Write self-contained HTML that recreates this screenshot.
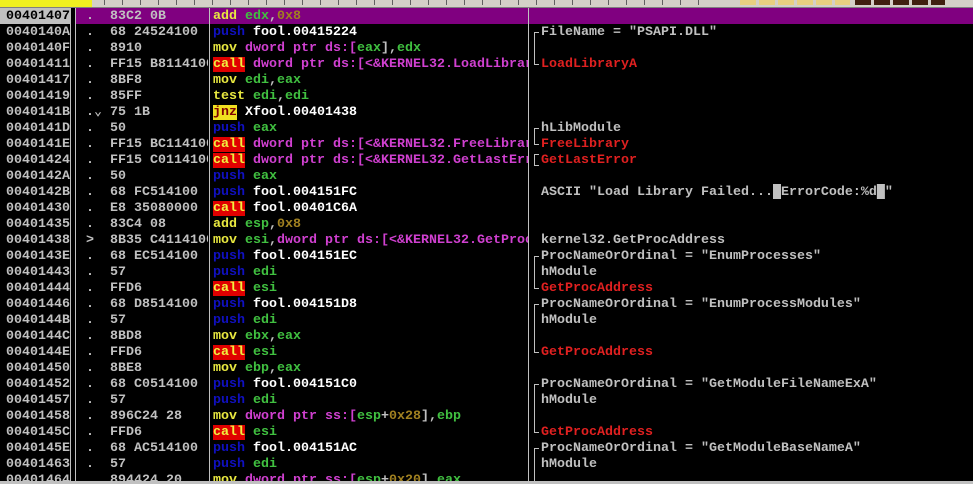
<!DOCTYPE html>
<html><head><meta charset="utf-8"><style>
html,body{margin:0;padding:0;background:#000;width:973px;height:484px;overflow:hidden}
body{position:relative;font-family:"Liberation Mono",monospace;font-weight:bold;font-size:13.33px;color:#c0c0c0}
.tb{position:absolute;left:0;top:0;width:973px;height:8px;background:#d4d0c8}
.row{position:absolute;left:0;width:973px;height:16px;line-height:18px;white-space:pre}
.c{position:absolute;top:0;height:16px;overflow:hidden}
.a{left:6px;width:64px}
.h{left:86px;width:122px}
.d{left:213px;width:315px}
.m{left:541px;width:432px}
.vl{position:absolute;top:8px;height:473px;width:1px;background:#c0c0c0}
.y{color:#e8e840}.g{color:#40c040}.b{color:#1010c0}.p{color:#d040d0}.w{color:#fff}.o{color:#a08020}.r{color:#e02020}
.call{background:#e00000;color:#f0f040}
.jnz{background:#f0e020;color:#800000}
.sel{background:#800080}
.br{position:absolute;left:534px;border-left:1px solid #c0c0c0}
.t{position:absolute;left:534px;width:5px;height:1px;background:#c0c0c0}
</style></head><body>
<div class="tb">
<div style="position:absolute;left:0;top:0;width:92px;height:7px;background:#f0f020"></div>
<div style="position:absolute;left:100px;top:0;width:600px;height:5px;background:repeating-linear-gradient(90deg,#d4d0c8 0 4px,#606060 4px 5px,#d4d0c8 5px 18px)"></div>
<div style="position:absolute;left:740px;top:0;width:110px;height:5px;background:repeating-linear-gradient(90deg,#e8d080 0 16px,#d4d0c8 16px 19px)"></div>
<div style="position:absolute;left:855px;top:0;width:90px;height:5px;background:repeating-linear-gradient(90deg,#402010 0 16px,#d4d0c8 16px 19px)"></div>
<div style="position:absolute;left:0;top:7px;width:973px;height:1px;background:#808080"></div>
</div>
<div class="row sel" style="top:8px;left:76px;width:897px"></div>
<div style="position:absolute;top:8px;left:0;width:70px;height:16px;background:#c0c0c0"></div>

<div class="vl" style="left:70px"></div>
<div class="vl" style="left:75px"></div>
<div class="vl" style="left:209px"></div>
<div class="vl" style="left:528px"></div>
<div style="position:absolute;left:0;top:481px;width:973px;height:3px;background:#c0c0c0"></div>

<div class="row" style="top:8px"><span class="c a" style="color:#000">00401407</span><span class="c h">.  83C2 0B</span><span class="c d"><span class="y">add</span> <span class="g">edx</span>,<span class="o">0x8</span></span></div>
<div class="row" style="top:24px"><span class="c a">0040140A</span><span class="c h">.  68 24524100</span><span class="c d"><span class="b">push</span> <span class="w">fool.00415224</span></span><span class="c m">FileName = "PSAPI.DLL"</span></div>
<div class="row" style="top:40px"><span class="c a">0040140F</span><span class="c h">.  8910</span><span class="c d"><span class="y">mov</span> <span class="p">dword ptr ds:[</span><span class="g">eax</span>],<span class="g">edx</span></span></div>
<div class="row" style="top:56px"><span class="c a">00401411</span><span class="c h">.  FF15 B8114100</span><span class="c d"><span class="call">call</span> <span class="p">dword ptr ds:[&lt;&amp;KERNEL32.LoadLibraryA&gt;]</span></span><span class="c m r">LoadLibraryA</span></div>
<div class="row" style="top:72px"><span class="c a">00401417</span><span class="c h">.  8BF8</span><span class="c d"><span class="y">mov</span> <span class="g">edi</span>,<span class="g">eax</span></span></div>
<div class="row" style="top:88px"><span class="c a">00401419</span><span class="c h">.  85FF</span><span class="c d"><span class="y">test</span> <span class="g">edi</span>,<span class="g">edi</span></span></div>
<div class="row" style="top:104px"><span class="c a">0040141B</span><span class="c h">.&#x2304; 75 1B</span><span class="c d"><span class="jnz">jnz</span> <span class="w">Xfool.00401438</span></span></div>
<div class="row" style="top:120px"><span class="c a">0040141D</span><span class="c h">.  50</span><span class="c d"><span class="b">push</span> <span class="g">eax</span></span><span class="c m">hLibModule</span></div>
<div class="row" style="top:136px"><span class="c a">0040141E</span><span class="c h">.  FF15 BC114100</span><span class="c d"><span class="call">call</span> <span class="p">dword ptr ds:[&lt;&amp;KERNEL32.FreeLibrary&gt;]</span></span><span class="c m r">FreeLibrary</span></div>
<div class="row" style="top:152px"><span class="c a">00401424</span><span class="c h">.  FF15 C0114100</span><span class="c d"><span class="call">call</span> <span class="p">dword ptr ds:[&lt;&amp;KERNEL32.GetLastError&gt;]</span></span><span class="c m r">GetLastError</span></div>
<div class="row" style="top:168px"><span class="c a">0040142A</span><span class="c h">.  50</span><span class="c d"><span class="b">push</span> <span class="g">eax</span></span></div>
<div class="row" style="top:184px"><span class="c a">0040142B</span><span class="c h">.  68 FC514100</span><span class="c d"><span class="b">push</span> <span class="w">fool.004151FC</span></span><span class="c m">ASCII "Load Library Failed...&#x2588;ErrorCode:%d&#x2588;"</span></div>
<div class="row" style="top:200px"><span class="c a">00401430</span><span class="c h">.  E8 35080000</span><span class="c d"><span class="call">call</span> <span class="w">fool.00401C6A</span></span></div>
<div class="row" style="top:216px"><span class="c a">00401435</span><span class="c h">.  83C4 08</span><span class="c d"><span class="y">add</span> <span class="g">esp</span>,<span class="o">0x8</span></span></div>
<div class="row" style="top:232px"><span class="c a">00401438</span><span class="c h">&gt;  8B35 C4114100</span><span class="c d"><span class="y">mov</span> <span class="g">esi</span>,<span class="p">dword ptr ds:[&lt;&amp;KERNEL32.GetProcAddress&gt;]</span></span><span class="c m">kernel32.GetProcAddress</span></div>
<div class="row" style="top:248px"><span class="c a">0040143E</span><span class="c h">.  68 EC514100</span><span class="c d"><span class="b">push</span> <span class="w">fool.004151EC</span></span><span class="c m">ProcNameOrOrdinal = "EnumProcesses"</span></div>
<div class="row" style="top:264px"><span class="c a">00401443</span><span class="c h">.  57</span><span class="c d"><span class="b">push</span> <span class="g">edi</span></span><span class="c m">hModule</span></div>
<div class="row" style="top:280px"><span class="c a">00401444</span><span class="c h">.  FFD6</span><span class="c d"><span class="call">call</span> <span class="g">esi</span></span><span class="c m r">GetProcAddress</span></div>
<div class="row" style="top:296px"><span class="c a">00401446</span><span class="c h">.  68 D8514100</span><span class="c d"><span class="b">push</span> <span class="w">fool.004151D8</span></span><span class="c m">ProcNameOrOrdinal = "EnumProcessModules"</span></div>
<div class="row" style="top:312px"><span class="c a">0040144B</span><span class="c h">.  57</span><span class="c d"><span class="b">push</span> <span class="g">edi</span></span><span class="c m">hModule</span></div>
<div class="row" style="top:328px"><span class="c a">0040144C</span><span class="c h">.  8BD8</span><span class="c d"><span class="y">mov</span> <span class="g">ebx</span>,<span class="g">eax</span></span></div>
<div class="row" style="top:344px"><span class="c a">0040144E</span><span class="c h">.  FFD6</span><span class="c d"><span class="call">call</span> <span class="g">esi</span></span><span class="c m r">GetProcAddress</span></div>
<div class="row" style="top:360px"><span class="c a">00401450</span><span class="c h">.  8BE8</span><span class="c d"><span class="y">mov</span> <span class="g">ebp</span>,<span class="g">eax</span></span></div>
<div class="row" style="top:376px"><span class="c a">00401452</span><span class="c h">.  68 C0514100</span><span class="c d"><span class="b">push</span> <span class="w">fool.004151C0</span></span><span class="c m">ProcNameOrOrdinal = "GetModuleFileNameExA"</span></div>
<div class="row" style="top:392px"><span class="c a">00401457</span><span class="c h">.  57</span><span class="c d"><span class="b">push</span> <span class="g">edi</span></span><span class="c m">hModule</span></div>
<div class="row" style="top:408px"><span class="c a">00401458</span><span class="c h">.  896C24 28</span><span class="c d"><span class="y">mov</span> <span class="p">dword ptr ss:[</span><span class="g">esp</span>+<span class="o">0x28</span>],<span class="g">ebp</span></span></div>
<div class="row" style="top:424px"><span class="c a">0040145C</span><span class="c h">.  FFD6</span><span class="c d"><span class="call">call</span> <span class="g">esi</span></span><span class="c m r">GetProcAddress</span></div>
<div class="row" style="top:440px"><span class="c a">0040145E</span><span class="c h">.  68 AC514100</span><span class="c d"><span class="b">push</span> <span class="w">fool.004151AC</span></span><span class="c m">ProcNameOrOrdinal = "GetModuleBaseNameA"</span></div>
<div class="row" style="top:456px"><span class="c a">00401463</span><span class="c h">.  57</span><span class="c d"><span class="b">push</span> <span class="g">edi</span></span><span class="c m">hModule</span></div>
<div class="row" style="top:472px;height:9px;overflow:hidden"><span class="c a">00401464</span><span class="c h">.  894424 20</span><span class="c d"><span class="y">mov</span> <span class="p">dword ptr ss:[</span><span class="g">esp</span>+<span class="o">0x20</span>],<span class="g">eax</span></span></div>

<div class="br" style="top:32px;height:32px"></div><div class="t" style="top:32px"></div><div class="t" style="top:64px"></div>
<div class="br" style="top:128px;height:16px"></div><div class="t" style="top:128px"></div><div class="t" style="top:144px"></div>
<div class="br" style="top:154px;height:12px"></div><div class="t" style="top:154px"></div><div class="t" style="top:165px"></div>
<div class="br" style="top:256px;height:32px"></div><div class="t" style="top:256px"></div><div class="t" style="top:288px"></div>
<div class="br" style="top:304px;height:48px"></div><div class="t" style="top:304px"></div><div class="t" style="top:352px"></div>
<div class="br" style="top:384px;height:48px"></div><div class="t" style="top:384px"></div><div class="t" style="top:432px"></div>
<div class="br" style="top:448px;height:33px"></div><div class="t" style="top:448px"></div>
</body></html>
